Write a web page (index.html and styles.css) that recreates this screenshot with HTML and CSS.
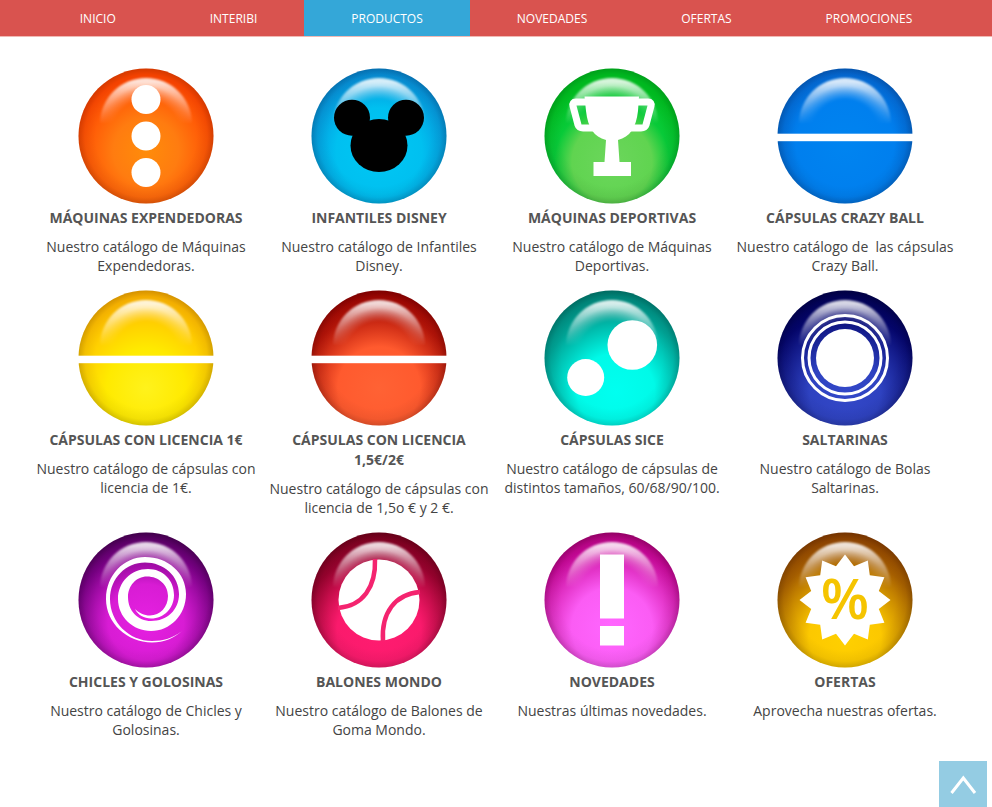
FILE: index.html
```html
<!DOCTYPE html>
<html lang="es">
<head>
  <meta charset="UTF-8" />
  <meta name="viewport" content="width=device-width, initial-scale=1.0"/>
  <title>Productos</title>
  <link rel="stylesheet" href="styles.css">
</head>
<body>
  <!-- Shared gradients -->
  <svg class="defs" width="0" height="0" aria-hidden="true">
    <defs>
      <radialGradient id="orange" gradientUnits="userSpaceOnUse" cx="0" cy="15" r="82"><stop offset="0" stop-color="#ff8c0a"/><stop offset=".4" stop-color="#ff7c10"/><stop offset=".9" stop-color="#ff4500"/></radialGradient>
      <radialGradient id="cyan" gradientUnits="userSpaceOnUse" cx="0" cy="15" r="86"><stop offset="0" stop-color="#00c8f4"/><stop offset=".5" stop-color="#00c0f0"/><stop offset="1" stop-color="#0880d0"/></radialGradient>
      <radialGradient id="green" gradientUnits="userSpaceOnUse" cx="0" cy="26" r="80"><stop offset="0" stop-color="#6cd65c"/><stop offset=".5" stop-color="#60d450"/><stop offset=".72" stop-color="#08ca38"/><stop offset="1" stop-color="#00c020"/></radialGradient>
      <radialGradient id="blue" gradientUnits="userSpaceOnUse" cx="0" cy="10" r="82"><stop offset="0" stop-color="#0084f0"/><stop offset=".6" stop-color="#007fee"/><stop offset="1" stop-color="#0560cc"/></radialGradient>
      <radialGradient id="yellow" gradientUnits="userSpaceOnUse" cx="0" cy="30" r="98"><stop offset="0" stop-color="#fff21c"/><stop offset=".4" stop-color="#ffea00"/><stop offset="1" stop-color="#ffae00"/></radialGradient>
      <radialGradient id="red" gradientUnits="userSpaceOnUse" cx="0" cy="30" r="98"><stop offset="0" stop-color="#ff6234"/><stop offset=".42" stop-color="#ff5a2e"/><stop offset=".78" stop-color="#b41408"/><stop offset="1" stop-color="#960000"/></radialGradient>
      <radialGradient id="teal" gradientUnits="userSpaceOnUse" cx="4" cy="34" r="102"><stop offset="0" stop-color="#00fff0"/><stop offset=".38" stop-color="#00fae8"/><stop offset=".75" stop-color="#00a496"/><stop offset="1" stop-color="#008074"/></radialGradient>
      <radialGradient id="navy" gradientUnits="userSpaceOnUse" cx="0" cy="34" r="102"><stop offset="0" stop-color="#3348c8"/><stop offset=".35" stop-color="#2e42c0"/><stop offset=".78" stop-color="#04056c"/><stop offset="1" stop-color="#00004e"/></radialGradient>
      <radialGradient id="purple" gradientUnits="userSpaceOnUse" cx="0" cy="22" r="90"><stop offset="0" stop-color="#e620e2"/><stop offset=".42" stop-color="#d81cd4"/><stop offset=".8" stop-color="#780084"/><stop offset="1" stop-color="#4c0058"/></radialGradient>
      <radialGradient id="crimson" gradientUnits="userSpaceOnUse" cx="0" cy="32" r="100"><stop offset="0" stop-color="#ff1c70"/><stop offset=".42" stop-color="#fa1a6c"/><stop offset=".78" stop-color="#98022e"/><stop offset="1" stop-color="#78001c"/></radialGradient>
      <radialGradient id="pink" gradientUnits="userSpaceOnUse" cx="0" cy="28" r="96"><stop offset="0" stop-color="#ff66ff"/><stop offset=".42" stop-color="#fb5cf4"/><stop offset=".85" stop-color="#c80898"/><stop offset="1" stop-color="#b00078"/></radialGradient>
      <radialGradient id="gold" gradientUnits="userSpaceOnUse" cx="0" cy="38" r="106"><stop offset="0" stop-color="#ffd000"/><stop offset=".34" stop-color="#fcc800"/><stop offset=".75" stop-color="#a86000"/><stop offset="1" stop-color="#8a3c00"/></radialGradient>

      <radialGradient id="rim" gradientUnits="userSpaceOnUse" cx="0" cy="0" r="68">
        <stop offset=".74" stop-color="#000" stop-opacity="0"/>
        <stop offset=".9" stop-color="#000" stop-opacity=".05"/>
        <stop offset="1" stop-color="#000" stop-opacity=".18"/>
      </radialGradient>
      <radialGradient id="gloss" gradientUnits="userSpaceOnUse" cx="0" cy="-4" r="54">
        <stop offset=".6" stop-color="#fff" stop-opacity="0"/>
        <stop offset=".86" stop-color="#fff" stop-opacity=".8"/>
        <stop offset="1" stop-color="#fff" stop-opacity=".86"/>
      </radialGradient>
      <linearGradient id="fade" gradientUnits="userSpaceOnUse" x1="0" y1="-54" x2="0" y2="-12">
        <stop offset="0" stop-color="#fff"/>
        <stop offset="1" stop-color="#000"/>
      </linearGradient>
      <filter id="soft"><feGaussianBlur stdDeviation="1"/></filter>
      <mask id="gloss-mask" maskUnits="userSpaceOnUse" x="-70" y="-70" width="140" height="140">
        <rect x="-70" y="-70" width="140" height="140" fill="url(#fade)"/>
      </mask>

      <g id="shine">
        <circle r="67.5" fill="url(#rim)"/>
        <g mask="url(#gloss-mask)"><circle cy="-12" r="46" fill="url(#gloss)" filter="url(#soft)"/></g>
      </g>
    </defs>
  </svg>

  <nav class="menu">
    <a href="#">INICIO</a>
    <a href="#">INTERIBI</a>
    <a href="#" class="active">PRODUCTOS</a>
    <a href="#">NOVEDADES</a>
    <a href="#">OFERTAS</a>
    <a href="#">PROMOCIONES</a>
  </nav>

  <main class="products">
    <a class="product" href="#">
      <svg class="ball" viewBox="-70 -70 140 140" aria-hidden="true">
        <circle r="67.5" fill="url(#orange)"/><use href="#shine"/>
        <g fill="#fff"><circle cy="-36.5" r="14.5"/><circle r="14.5"/><circle cy="36.5" r="14.5"/></g>
      </svg>
      <h2>MÁQUINAS EXPENDEDORAS</h2>
      <p>Nuestro catálogo de Máquinas Expendedoras.</p>
    </a>

    <a class="product" href="#">
      <svg class="ball" viewBox="-70 -70 140 140" aria-hidden="true">
        <circle r="67.5" fill="url(#cyan)"/><use href="#shine"/>
        <circle cx="-27" cy="-18.3" r="18"/><circle cx="27" cy="-18.3" r="18"/><ellipse cy="9.5" rx="28.5" ry="26.5"/>
      </svg>
      <h2>INFANTILES DISNEY</h2>
      <p>Nuestro catálogo de Infantiles Disney.</p>
    </a>

    <a class="product" href="#">
      <svg class="ball" viewBox="-70 -70 140 140" aria-hidden="true">
        <circle r="67.5" fill="url(#green)"/><use href="#shine"/>
        <path fill="#fff" d="M-27.5-39.5H27L26-25C24-8 18 1 6 4L7.5 26H19V40H-18.5V26H-7.5L-6 4C-18 1-24-8-26-25Z"/>
        <path fill="none" stroke="#fff" stroke-width="7" d="M-26-34H-36Q-40-34-39-30L-34-11Q-33-8-29-8H-18M26-34H36Q40-34 39-30L34-11Q33-8 29-8H18"/>
      </svg>
      <h2>MÁQUINAS DEPORTIVAS</h2>
      <p>Nuestro catálogo de Máquinas Deportivas.</p>
    </a>

    <a class="product" href="#">
      <svg class="ball" viewBox="-70 -70 140 140" aria-hidden="true">
        <circle r="67.5" fill="url(#blue)"/><use href="#shine"/>
        <rect x="-70" y="-2.3" width="140" height="7.5" fill="#fff"/>
      </svg>
      <h2>CÁPSULAS CRAZY BALL</h2>
      <p>Nuestro catálogo de&nbsp; las cápsulas Crazy Ball.</p>
    </a>

    <a class="product" href="#">
      <svg class="ball" viewBox="-70 -70 140 140" aria-hidden="true">
        <circle r="67.5" fill="url(#yellow)"/><use href="#shine"/>
        <rect x="-70" y="-2.3" width="140" height="7.5" fill="#fff"/>
      </svg>
      <h2>CÁPSULAS CON LICENCIA 1€</h2>
      <p>Nuestro catálogo de cápsulas con licencia de 1€.</p>
    </a>

    <a class="product" href="#">
      <svg class="ball" viewBox="-70 -70 140 140" aria-hidden="true">
        <circle r="67.5" fill="url(#red)"/><use href="#shine"/>
        <rect x="-70" y="-2.3" width="140" height="7.5" fill="#fff"/>
      </svg>
      <h2>CÁPSULAS CON LICENCIA 1,5€/2€</h2>
      <p>Nuestro catálogo de cápsulas con licencia de 1,5o € y 2 €.</p>
    </a>

    <a class="product" href="#">
      <svg class="ball" viewBox="-70 -70 140 140" aria-hidden="true">
        <circle r="67.5" fill="url(#teal)"/><use href="#shine"/>
        <g fill="#fff"><circle cx="20.3" cy="-13" r="24.8"/><circle cx="-26.3" cy="19.5" r="18.5"/></g>
      </svg>
      <h2>CÁPSULAS SICE</h2>
      <p>Nuestro catálogo de cápsulas de distintos tamaños, 60/68/90/100.</p>
    </a>

    <a class="product" href="#">
      <svg class="ball" viewBox="-70 -70 140 140" aria-hidden="true">
        <circle r="67.5" fill="url(#navy)"/><use href="#shine"/>
        <circle r="29" fill="#fff"/>
        <g fill="none" stroke="#fff" stroke-width="3"><circle r="36"/><circle r="42.5"/></g>
      </svg>
      <h2>SALTARINAS</h2>
      <p>Nuestro catálogo de Bolas Saltarinas.</p>
    </a>

    <a class="product" href="#">
      <svg class="ball" viewBox="-70 -70 140 140" aria-hidden="true">
        <circle r="67.5" fill="url(#purple)"/><use href="#shine"/>
        <path fill="#fff" d="M36 31C28 38 18 42.5 6 42.5C-19 42.5-40 23-40-1C-40-25-22-43-1-43C22-43 40-27 40-6C40 15 24 31 5 31C-13 31-28 17-28-1C-28-18-15-31 2-31C17-31 28-20 28-5C28 8 18 18.5 5 18.5C-2 18.5-8 15-11 9C-7 13-2 15.5 4 15.5C14 15.5 22 7 22-4C22-15 13-23.5 1-23.5C-10-23.5-18-14-18-3C-18 11-8 21 5 21C21 21 33 10 33-6C33-24 18-37.5-1-37.5C-20-37.5-36-22-36-1C-36 22-17 41 6 41C17 41 27 38 36 31Z"/>
      </svg>
      <h2>CHICLES Y GOLOSINAS</h2>
      <p>Nuestro catálogo de Chicles y Golosinas.</p>
    </a>

    <a class="product" href="#">
      <svg class="ball" viewBox="-70 -70 140 140" aria-hidden="true">
        <circle r="67.5" fill="url(#crimson)"/><use href="#shine"/>
        <circle r="40.5" fill="#fff"/>
        <path fill="none" stroke="#f4246f" stroke-width="4.5" d="M-4-41C-3-13-16 6-41 8M41-8C16-6 2 13 4 41"/>
      </svg>
      <h2>BALONES MONDO</h2>
      <p>Nuestro catálogo de Balones de Goma Mondo.</p>
    </a>

    <a class="product" href="#">
      <svg class="ball" viewBox="-70 -70 140 140" aria-hidden="true">
        <circle r="67.5" fill="url(#pink)"/><use href="#shine"/>
        <path fill="#fff" d="M-12-45.5H12V18.5H-12ZM-12 26H12V45.5H-12Z"/>
      </svg>
      <h2>NOVEDADES</h2>
      <p>Nuestras últimas novedades.</p>
    </a>

    <a class="product" href="#">
      <svg class="ball" viewBox="-70 -70 140 140" aria-hidden="true">
        <circle r="67.5" fill="url(#gold)"/><use href="#shine"/>
        <polygon fill="#fff" points="0,-45.5 9,-33.8 22.8,-39.4 24.8,-24.8 39.4,-22.8 33.8,-9 45.5,0 33.8,9 39.4,22.8 24.8,24.8 22.8,39.4 9,33.8 0,45.5 -9,33.8 -22.8,39.4 -24.8,24.8 -39.4,22.8 -33.8,9 -45.5,0 -33.8,-9 -39.4,-22.8 -24.8,-24.8 -22.8,-39.4 -9,-33.8"/>
        <text class="percent" x="0" y="19" text-anchor="middle">%</text>
      </svg>
      <h2>OFERTAS</h2>
      <p>Aprovecha nuestras ofertas.</p>
    </a>
  </main>

  <button class="to-top" type="button" aria-label="Subir">
    <svg width="48" height="46" viewBox="0 0 48 46" aria-hidden="true">
      <path fill="none" stroke="#fff" stroke-width="3" d="M12.5 32L24.3 17L36 32"/>
    </svg>
  </button>

  <script>
    document.querySelector('.to-top').addEventListener('click', function() {
      window.scrollTo(0, 0);
    });
  </script>
</body>
</html>
```

FILE: styles.css
```css
body {
  margin: 0;
  background: #fff;
  color: #444;
  font-family: 'Open Sans', sans-serif;
  font-size: 14px;
}

.defs {
  position: absolute;
}

/* Menu */
.menu {
  display: flex;
  justify-content: center;
  background: #d9534f;
  border-bottom: 1px solid #f0b9b4;
}

.menu a {
  padding: 2px 47px 0;
  color: #fff;
  font-size: 12px;
  line-height: 34px;
  text-decoration: none;
}

.menu a.active {
  background: #34a7d8;
}

/* Products */
.products {
  display: grid;
  grid-template-columns: repeat(4, 1fr);
  gap: 12px 11px;
  padding: 29px 36px 29px 35px;
}

.product {
  display: flex;
  flex-direction: column;
  align-items: center;
  color: #444;
  text-align: center;
  text-decoration: none;
}

.ball {
  width: 140px;
  height: 140px;
}

.product h2 {
  margin: 2px 0 9px;
  color: #555;
  font-size: 14px;
  font-weight: bold;
  line-height: 20px;
}

.product p {
  margin: 0 0 1px;
  line-height: 19px;
}

.percent {
  fill: #f5c400;
  font-size: 56px;
  font-weight: 600;
}

/* Scroll to top */
.to-top {
  position: fixed;
  right: 5px;
  bottom: 0;
  width: 48px;
  height: 46px;
  padding: 0;
  border: 0;
  background: #94cce3;
  cursor: pointer;
}

.to-top svg {
  display: block;
}
```
